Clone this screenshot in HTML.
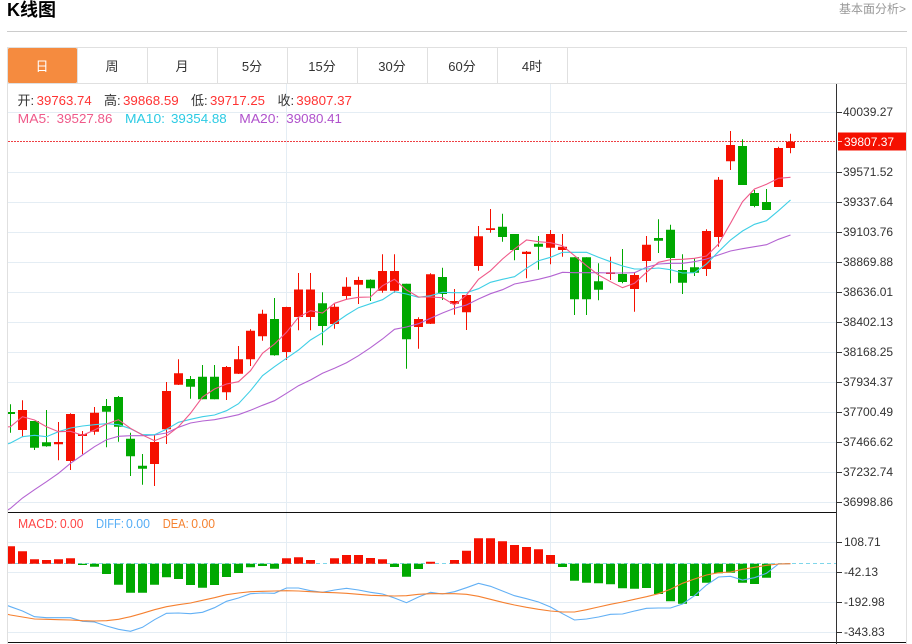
<!DOCTYPE html>
<html lang="zh">
<head>
<meta charset="utf-8">
<title>K线图</title>
<style>
html,body{margin:0;padding:0;background:#fff;width:912px;height:644px;overflow:hidden}
svg{display:block;position:absolute;left:0;top:0}
text{font-family:"Liberation Sans","Noto Sans CJK SC",sans-serif;white-space:pre}
.ax text{font-size:12px;fill:#333}
.tab text{font-size:13px;fill:#333;text-anchor:middle}
.h text{font-size:13px}
</style>
</head>
<body>
<svg width="912" height="644" viewBox="0 0 912 644" xmlns="http://www.w3.org/2000/svg">
<defs><clipPath id="c"><rect x="8" y="84" width="828" height="558"/></clipPath></defs>

<text x="7" y="16" style="font-size:18px;font-weight:700" fill="#000">K线图</text>
<text x="839" y="13" style="font-size:12px" fill="#999">基本面分析&gt;</text>
<rect x="7" y="31" width="900" height="1" fill="#ccc"/>

<!-- tab frame -->
<path d="M7.5 644V47.5H906.5V644" fill="none" stroke="#e0e0e0"/>
<rect x="8" y="83" width="898" height="1" fill="#e0e0e0"/>
<rect x="8" y="48" width="69" height="35" rx="1.5" fill="#f58b3f"/>
<path d="M77.5 48V83M147.5 48V83M217.5 48V83M287.5 48V83M357.5 48V83M427.5 48V83M497.5 48V83M567.5 48V83" stroke="#e0e0e0" fill="none"/>
<g class="tab">
<text x="42" y="71" style="fill:#fff">日</text>
<text x="112" y="71">周</text>
<text x="182" y="71">月</text>
<text x="252" y="71">5分</text>
<text x="322" y="71">15分</text>
<text x="392" y="71">30分</text>
<text x="462" y="71">60分</text>
<text x="532" y="71">4时</text>
</g>

<!-- grid -->
<path d="M8 112.5H836M8 172.5H836M8 202.5H836M8 232.5H836M8 262.5H836M8 292.5H836M8 322.5H836M8 352.5H836M8 382.5H836M8 412.5H836M8 442.5H836M8 472.5H836M8 502.5H836M8 542.5H836M8 572.5H836M8 602.5H836M8 632.5H836M286.5 84V642M550.5 84V642" stroke="#e4edf4" fill="none"/>

<g clip-path="url(#c)">
<!-- price line -->
<path d="M8 141.5H836" stroke="#ee4044" stroke-dasharray="2 1" fill="none"/>

<!-- wicks -->
<path fill="none" stroke="#00a800" d="M10.5 404.3V432.7M34.5 421V450M46.5 410V446.7M106.5 399V447.3M118.5 396V441.7M130.5 432.7V476M142.5 454V484.7M190.5 376V398.7M202.5 365V399.3M214.5 365V399.3M274.5 298V355.7M322.5 292.3V345.3M370.5 279.3V301M406.5 283.7V368.7M442.5 267.7V300M502.5 213.7V241.7M514.5 234V260.3M538.5 236V269.7M574.5 257.3V315M586.5 257.3V315M598.5 263.3V300.3M622.5 249V283.3M658.5 219.3V253M670.5 224.7V283.3M682.5 254.3V294M694.5 258.3V276M742.5 139.3V185M754.5 190V207.3M766.5 189V210"/>
<path fill="none" stroke="#f51000" d="M22.5 400.3V436.7M58.5 422V460.3M70.5 413.3V470M82.5 431V454.3M94.5 407V434.7M154.5 435V486M166.5 382V444M178.5 359.3V385M226.5 366V400M238.5 346V374M250.5 329.3V366M262.5 309.7V340.7M286.5 306.7V360M298.5 273V330.3M310.5 273V330.3M334.5 304V328.7M346.5 277.3V300M358.5 276.7V304M382.5 254.3V292.7M394.5 254.3V292.7M418.5 317.3V348.7M430.5 273.3V324M454.5 289V314.7M466.5 295V330M478.5 226V270.7M490.5 209V232.7M526.5 251V278.3M550.5 230V264.3M562.5 234V256.7M610.5 256.7V280M634.5 272V311.7M646.5 236V282.3M706.5 229.3V276M718.5 177V246.7M730.5 131V170M778.5 146.7V186.7M790.5 133.7V153.3"/>

<!-- bodies -->
<path fill="#00a800" d="M6 412h9v2h-9zM30 421h9v26.7h-9zM42 442.3h9v4h-9zM102 406h9v5.7h-9zM114 397h9v29.7h-9zM126 438.7h9v17.6h-9zM138 465.7h9v3h-9zM186 379h9v7.7h-9zM198 376.7h9v22.6h-9zM210 376.7h9v22.6h-9zM270 319h9v36.3h-9zM318 303.3h9v22.7h-9zM366 279.7h9v8.6h-9zM402 283.7h9v55.6h-9zM438 277h9v17h-9zM498 226.7h9v10.3h-9zM510 234h9v16h-9zM534 243.7h9v3h-9zM570 257.3h9v42h-9zM582 257.3h9v42h-9zM594 281.3h9v8.4h-9zM618 274h9v8h-9zM654 238h9v2.7h-9zM666 229.7h9v28.3h-9zM678 270h9v12.7h-9zM690 267.3h9v5.4h-9zM738 146h9v39h-9zM750 193h9v13h-9zM762 202h9v8h-9z"/>
<path fill="#f51000" d="M18 410h9v20h-9zM54 442h9v2.3h-9zM66 414h9v47h-9zM78 434h9v2h-9zM90 412.7h9v19h-9zM150 442h9v22h-9zM162 391h9v38.3h-9zM174 373.3h9v11.4h-9zM222 367h9v25.3h-9zM234 359.3h9v14.4h-9zM246 330.7h9v28.6h-9zM258 313.7h9v22.6h-9zM282 307h9v45h-9zM294 289.5h9v27.5h-9zM306 289.5h9v27.5h-9zM330 306.7h9v17.3h-9zM342 286.7h9v9.3h-9zM354 280h9v4.7h-9zM378 271h9v19.7h-9zM390 271h9v19.7h-9zM414 319h9v8h-9zM426 274.3h9v49.4h-9zM450 301h9v2.7h-9zM462 295h9v17.3h-9zM474 236.3h9v29.7h-9zM486 228.3h9v1.7h-9zM522 251.7h9v2.3h-9zM546 234h9v13.7h-9zM558 246.7h9v3.3h-9zM606 272.3h9v1.7h-9zM630 275h9v14h-9zM642 244.7h9v16.3h-9zM702 231h9v38h-9zM714 179.7h9v57.3h-9zM726 145h9v16.3h-9zM774 148h9v39h-9zM786 141.7h9v6.3h-9z"/>

<!-- MA lines -->
<polyline fill="none" stroke="#b464d2" stroke-width="1.1" points="6,511 10.5,508.3 22.5,498 34.5,489.7 46.5,481.7 58.5,473.3 70.5,463.3 82.5,455 94.5,446.7 106.5,439.7 118.5,436.3 130.5,435.7 142.5,435.7 154.5,435 166.5,433 178.5,427.3 190.5,423 202.5,421 214.5,419.7 226.5,417.3 238.5,414.7 250.5,410.3 262.5,405.3 274.5,400.7 286.5,393.3 298.5,385.7 310.5,380 322.5,373.3 334.5,368.3 346.5,362.7 358.5,355.7 370.5,347.7 382.5,339 394.5,329.3 406.5,327 418.5,323.7 430.5,318.3 442.5,313 454.5,308.3 466.5,305 478.5,299 490.5,293.7 502.5,289.7 514.5,284 526.5,281.7 538.5,279.3 550.5,276.3 562.5,272.3 574.5,272.7 586.5,272.7 598.5,272.7 610.5,273 622.5,273 634.5,272.7 646.5,267.3 658.5,264 670.5,263.3 682.5,263.3 694.5,261.7 706.5,259 718.5,255 730.5,251 742.5,248.7 754.5,246.7 766.5,244.7 778.5,239.3 790.5,235"/>
<polyline fill="none" stroke="#3fcfe6" stroke-width="1.1" points="6,444.5 10.5,443 22.5,436.7 34.5,435.3 46.5,436.7 58.5,431.7 70.5,428 82.5,426 94.5,424.7 106.5,423.7 118.5,424.7 130.5,428.7 142.5,434.7 154.5,434.7 166.5,429.3 178.5,422.3 190.5,419.3 202.5,416.7 214.5,415 226.5,410.7 238.5,403.7 250.5,390.7 262.5,375.7 274.5,366.7 286.5,358.3 298.5,350 310.5,340 322.5,332.7 334.5,323.3 346.5,315 358.5,307.7 370.5,303.7 382.5,299.7 394.5,291.7 406.5,294 418.5,297.3 430.5,295.7 442.5,292.3 454.5,292.7 466.5,292.7 478.5,288.7 490.5,282.3 502.5,279.3 514.5,276.7 526.5,268.3 538.5,260.7 550.5,257.3 562.5,252.3 574.5,252.3 586.5,252.3 598.5,257.3 610.5,261.7 622.5,266 634.5,269 646.5,269 658.5,268 670.5,269.7 682.5,273 694.5,272.7 706.5,264 718.5,251.7 730.5,240 742.5,231 754.5,224.3 766.5,220.7 778.5,210.7 790.5,200"/>
<polyline fill="none" stroke="#ef5a8a" stroke-width="1.1" points="6,427 10.5,426.7 22.5,416.7 34.5,420 46.5,426.7 58.5,431.7 70.5,431.3 82.5,435.3 94.5,430 106.5,424 118.5,419.7 130.5,428.3 142.5,435 154.5,440.7 166.5,436 178.5,426.7 190.5,413.3 202.5,397 214.5,389 226.5,384 238.5,381.7 250.5,370.7 262.5,353.3 274.5,344 286.5,332.3 298.5,317.3 310.5,310.7 322.5,313 334.5,303.3 346.5,299.3 358.5,297.3 370.5,297 382.5,285.7 394.5,279.3 406.5,290 418.5,297 430.5,297 442.5,297.7 454.5,305 466.5,295 478.5,279.3 490.5,270.7 502.5,259 514.5,249 526.5,240 538.5,241.7 550.5,242.7 562.5,245.7 574.5,255.7 586.5,265.7 598.5,275 610.5,281.7 622.5,287.7 634.5,283.3 646.5,272.3 658.5,262.3 670.5,259.7 682.5,259.3 694.5,258.3 706.5,256 718.5,244 730.5,223.3 742.5,201.7 754.5,189 766.5,184.3 778.5,178.3 790.5,177.3"/>

<!-- MACD -->
<path d="M8 563.5H836" stroke="#7fd6ea" stroke-dasharray="4 3" fill="none"/>
<path fill="#00a800" d="M78 563.7h9v1.3h-9zM90 563.7h9v3h-9zM102 563.7h9v10.3h-9zM114 563.7h9v21h-9zM126 563.7h9v29h-9zM138 563.7h9v29h-9zM150 563.7h9v21h-9zM162 563.7h9v13.6h-9zM174 563.7h9v15.3h-9zM186 563.7h9v21.3h-9zM198 563.7h9v24h-9zM210 563.7h9v21.3h-9zM222 563.7h9v13.3h-9zM234 563.7h9v9.3h-9zM246 563.7h9v3.6h-9zM258 563.7h9v2.3h-9zM270 563.7h9v5h-9zM390 563.7h9v3.3h-9zM402 563.7h9v13h-9zM414 563.7h9v5.3h-9zM558 563.7h9v3.3h-9zM570 563.7h9v17h-9zM582 563.7h9v19h-9zM594 563.7h9v19.6h-9zM606 563.7h9v20.6h-9zM618 563.7h9v24.6h-9zM630 563.7h9v25h-9zM642 563.7h9v24.3h-9zM654 563.7h9v30.3h-9zM666 563.7h9v37.6h-9zM678 563.7h9v40h-9zM690 563.7h9v32.3h-9zM702 563.7h9v19h-9zM714 563.7h9v9.6h-9zM726 563.7h9v9h-9zM738 563.7h9v19h-9zM750 563.7h9v20.3h-9zM762 563.7h9v14h-9z"/>
<path fill="#f51000" d="M6 546.3h9v17.4h-9zM18 551.3h9v12.4h-9zM30 559.3h9v4.4h-9zM42 560h9v3.7h-9zM54 559.3h9v4.4h-9zM66 558.3h9v5.4h-9zM282 558.3h9v5.4h-9zM294 557.3h9v6.4h-9zM306 560h9v3.7h-9zM330 558.3h9v5.4h-9zM342 555h9v8.7h-9zM354 555h9v8.7h-9zM366 558h9v5.7h-9zM378 559.3h9v4.4h-9zM426 561.7h9v2h-9zM450 560h9v3.7h-9zM462 550.7h9v13h-9zM474 538.3h9v25.4h-9zM486 538.3h9v25.4h-9zM498 541.3h9v22.4h-9zM510 545h9v18.7h-9zM522 547h9v16.7h-9zM534 549.3h9v14.4h-9zM546 555h9v8.7h-9z"/>
<polyline fill="none" stroke="#62b0f5" stroke-width="1.1" points="6,605 10.5,606.7 22.5,611 34.5,616.7 46.5,617.7 58.5,617.7 70.5,617.7 82.5,621.3 94.5,622 106.5,626 118.5,629.3 130.5,631.3 142.5,627.3 154.5,619.7 166.5,613.3 178.5,613 190.5,613.7 202.5,612.3 214.5,607.7 226.5,601.3 238.5,598 250.5,593.7 262.5,593 274.5,593.3 286.5,588 298.5,588 310.5,590.7 322.5,592.3 334.5,590 346.5,588.3 358.5,590 370.5,592.3 382.5,594 394.5,598 406.5,602.7 418.5,597 430.5,592.3 442.5,594 454.5,591.7 466.5,587.7 478.5,583.3 490.5,586.3 502.5,591 514.5,595.7 526.5,598.7 538.5,602 550.5,607 562.5,613.7 574.5,620 586.5,619 598.5,617 610.5,614.3 622.5,614 634.5,611 646.5,608.3 658.5,608 670.5,608 682.5,604 694.5,595.7 706.5,585 718.5,577 730.5,576.3 742.5,580 754.5,577.7 766.5,573.3 778.5,564 790.5,563.7"/>
<polyline fill="none" stroke="#f58030" stroke-width="1.1" points="6,614 10.5,615 22.5,617 34.5,619 46.5,619.3 58.5,619.7 70.5,620 82.5,620.7 94.5,621 106.5,620.7 118.5,619.3 130.5,616.7 142.5,613.3 154.5,609.7 166.5,606.7 178.5,604.7 190.5,603 202.5,600.3 214.5,597.7 226.5,594.7 238.5,593 250.5,591.7 262.5,591.3 274.5,591 286.5,590.7 298.5,591 310.5,591.7 322.5,592.3 334.5,592.7 346.5,593.3 358.5,594.3 370.5,595.3 382.5,595.7 394.5,596 406.5,595.7 418.5,594.3 430.5,593.7 442.5,593.7 454.5,593.7 466.5,594.3 478.5,596.3 490.5,599.3 502.5,602.3 514.5,605 526.5,607.3 538.5,609.3 550.5,611 562.5,612 574.5,612 586.5,609.7 598.5,607 610.5,604.3 622.5,602 634.5,599.3 646.5,596.7 658.5,593.7 670.5,589.3 682.5,583.3 694.5,579 706.5,575 718.5,572.7 730.5,572 742.5,569.3 754.5,567.3 766.5,565.3 778.5,564 790.5,563.7"/>
</g>

<!-- frame lines -->
<path d="M8 512.5H836M8 642.5H906" stroke="#111" fill="none"/>
<path d="M836.5 84V644" stroke="#333" fill="none"/>
<path d="M837 112.5h5M837 172.5h5M837 202.5h5M837 232.5h5M837 262.5h5M837 292.5h5M837 322.5h5M837 352.5h5M837 382.5h5M837 412.5h5M837 442.5h5M837 472.5h5M837 502.5h5M837 542.5h5M837 572.5h5M837 602.5h5M837 632.5h5" stroke="#333" fill="none"/>

<g class="ax">
<text x="843" y="116">40039.27</text>
<text x="843" y="176">39571.52</text>
<text x="843" y="206">39337.64</text>
<text x="843" y="236">39103.76</text>
<text x="843" y="266">38869.88</text>
<text x="843" y="296">38636.01</text>
<text x="843" y="326">38402.13</text>
<text x="843" y="356">38168.25</text>
<text x="843" y="386">37934.37</text>
<text x="843" y="416">37700.49</text>
<text x="843" y="446">37466.62</text>
<text x="843" y="476">37232.74</text>
<text x="843" y="506">36998.86</text>
<text x="844" y="546">108.71</text>
<text x="844" y="576">-42.13</text>
<text x="844" y="606">-192.98</text>
<text x="844" y="636">-343.83</text>
</g>

<rect x="838" y="132.5" width="68" height="18" fill="#f51000"/>
<rect x="838" y="141" width="4" height="1" fill="#ffc8c0"/>
<text x="844" y="146" style="font-size:12px" fill="#fff">39807.37</text>

<!-- legends -->
<g class="h">
<text x="17.5" y="105" fill="#333">开:</text><text x="36.7" y="105" fill="#f33" textLength="55" lengthAdjust="spacingAndGlyphs">39763.74</text>
<text x="104" y="105" fill="#333">高:</text><text x="123" y="105" fill="#f33" textLength="55.7" lengthAdjust="spacingAndGlyphs">39868.59</text>
<text x="191" y="105" fill="#333">低:</text><text x="210" y="105" fill="#f33" textLength="55" lengthAdjust="spacingAndGlyphs">39717.25</text>
<text x="277.5" y="105" fill="#333">收:</text><text x="296.3" y="105" fill="#f33" textLength="55.7" lengthAdjust="spacingAndGlyphs">39807.37</text>
<text x="17.7" y="123" fill="#ef5a8a" textLength="32.3" lengthAdjust="spacingAndGlyphs">MA5:</text><text x="56.7" y="123" fill="#ef5a8a" textLength="55.7" lengthAdjust="spacingAndGlyphs">39527.86</text>
<text x="125" y="123" fill="#2ccbe4" textLength="40" lengthAdjust="spacingAndGlyphs">MA10:</text><text x="171" y="123" fill="#2ccbe4" textLength="55.7" lengthAdjust="spacingAndGlyphs">39354.88</text>
<text x="239.3" y="123" fill="#b052cc" textLength="40" lengthAdjust="spacingAndGlyphs">MA20:</text><text x="286.3" y="123" fill="#b052cc" textLength="55.7" lengthAdjust="spacingAndGlyphs">39080.41</text>
<text x="18" y="528" fill="#f44" textLength="39.3" lengthAdjust="spacingAndGlyphs">MACD:</text><text x="60" y="528" fill="#f44" textLength="23.4" lengthAdjust="spacingAndGlyphs">0.00</text>
<text x="96" y="528" fill="#55adf5" textLength="28" lengthAdjust="spacingAndGlyphs">DIFF:</text><text x="126" y="528" fill="#55adf5" textLength="24" lengthAdjust="spacingAndGlyphs">0.00</text>
<text x="162.7" y="528" fill="#f58230" textLength="26" lengthAdjust="spacingAndGlyphs">DEA:</text><text x="191.3" y="528" fill="#f58230" textLength="23.7" lengthAdjust="spacingAndGlyphs">0.00</text>
</g>
</svg>
</body>
</html>
